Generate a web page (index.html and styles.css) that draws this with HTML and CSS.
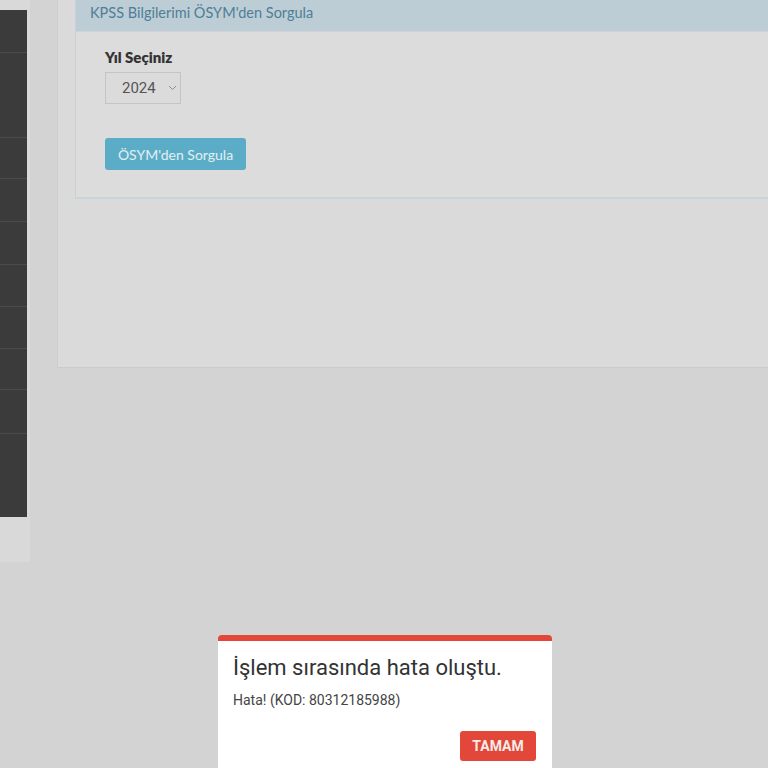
FILE: index.html
```html
<!DOCTYPE html>
<html>
    <head>
        <meta charset="utf-8">
        <link rel="stylesheet" href="styles.css">
    </head>

    <body>
        <div class="layout">
            <div class="side">
                <div class="menu">
                    <div class="item" style="height: 43px"></div>
                    <div class="item" style="height: 85px"></div>
                    <div class="item" style="height: 41px"></div>
                    <div class="item" style="height: 43px"></div>
                    <div class="item" style="height: 43px"></div>
                    <div class="item" style="height: 42px"></div>
                    <div class="item" style="height: 42px"></div>
                    <div class="item" style="height: 41px"></div>
                    <div class="item" style="height: 44px"></div>
                    <div class="item last" style="height: 83px"></div>
                </div>
            </div>

            <div class="main">
                <div class="panel">
                    <div class="card">
                        <div class="card-head">
                            KPSS Bilgilerimi ÖSYM'den Sorgula
                        </div>

                        <div class="card-body">
                            <div class="label">Yıl Seçiniz</div>

                            <div class="select">
                                <span>2024</span>
                                <svg width="9" height="6" viewBox="0 0 9 6">
                                    <path d="M1 1 L4.5 4.5 L8 1" fill="none" stroke="#8a8a8a" stroke-width="1"/>
                                </svg>
                            </div>

                            <button class="btn query">ÖSYM'den Sorgula</button>
                        </div>
                    </div>
                </div>
            </div>
        </div>

        <div class="dialog">
            <div class="dialog-title">İşlem sırasında hata oluştu.</div>
            <div class="dialog-text">Hata! (KOD: 80312185988)</div>
            <div class="dialog-foot">
                <button class="btn ok">TAMAM</button>
            </div>
        </div>
    </body>
</html>
```

FILE: styles.css
```css
html, body
{
    margin: 0;
    height: 768px;
    overflow: hidden;
}

body
{
    background-color: #d3d3d3;
    font-family: Lato, "Open Sans", sans-serif;
}

.layout
{
    display: flex;
    align-items: flex-start;
}

.side
{
    width: 30px;
    height: 562px;
    background-color: #d9d9d9;
    padding-top: 10px;
    box-sizing: border-box;
}

.menu
{
    width: 27px;
    background-color: #3b3b3b;
}

.item
{
    border-bottom: 1px solid #4b4b4b;
    box-sizing: border-box;
}

.item.last
{
    border-bottom: none;
}

.main
{
    flex: 1;
    padding-left: 27px;
}

.panel
{
    background-color: #dadada;
    border-left: 1px solid #cdcdcd;
    border-bottom: 1px solid #cbcbcb;
    padding-left: 17px;
    padding-bottom: 168px;
}

.card
{
    border-left: 1px solid #c8d2d6;
    border-bottom: 2px solid #c6d5d9;
    background-color: #dcdcdc;
}

.card-head
{
    height: 32px;
    box-sizing: border-box;
    padding: 3px 0 0 14px;
    line-height: 20px;
    background-color: #bccdd5;
    border-bottom: 1px solid #cfd3d8;
    color: #4f7e97;
    font-size: 14.5px;
}

.card-body
{
    padding: 15px 0 27px 29px;
}

.label
{
    font-weight: 800;
    font-size: 15px;
    color: #333333;
    line-height: 20px;
}

.select
{
    margin-top: 5px;
    width: 76px;
    height: 32px;
    box-sizing: border-box;
    border: 1px solid #c4c4c4;
    background-color: #dbdbdb;
    display: flex;
    align-items: center;
    padding-left: 16px;
    gap: 12px;
    font-family: Roboto, sans-serif;
    font-size: 15px;
    color: #555555;
}

.btn
{
    border: none;
    cursor: pointer;
    border-radius: 3px;
}

.query
{
    display: block;
    margin-top: 34px;
    width: 141px;
    height: 32px;
    background-color: #5badc7;
    color: #e4eff3;
    font-family: Lato, sans-serif;
    font-size: 14px;
}

.dialog
{
    position: fixed;
    left: 218px;
    top: 635px;
    width: 334px;
    height: 150px;
    box-sizing: border-box;
    background-color: white;
    border-top: 6px solid #e2473a;
    border-radius: 4px 4px 0 0;
    padding: 12px 16px 0 15px;
    font-family: Roboto, sans-serif;
}

.dialog-title
{
    font-size: 22px;
    color: #333333;
    line-height: 30px;
}

.dialog-text
{
    margin-top: 8px;
    font-size: 14px;
    color: #444444;
    line-height: 18px;
}

.dialog-foot
{
    display: flex;
    justify-content: flex-end;
    margin-top: 22px;
}

.ok
{
    width: 76px;
    height: 30px;
    background-color: #e2473a;
    color: #f4ece8;
    font-family: Roboto, sans-serif;
    font-weight: bold;
    font-size: 14px;
}
```
